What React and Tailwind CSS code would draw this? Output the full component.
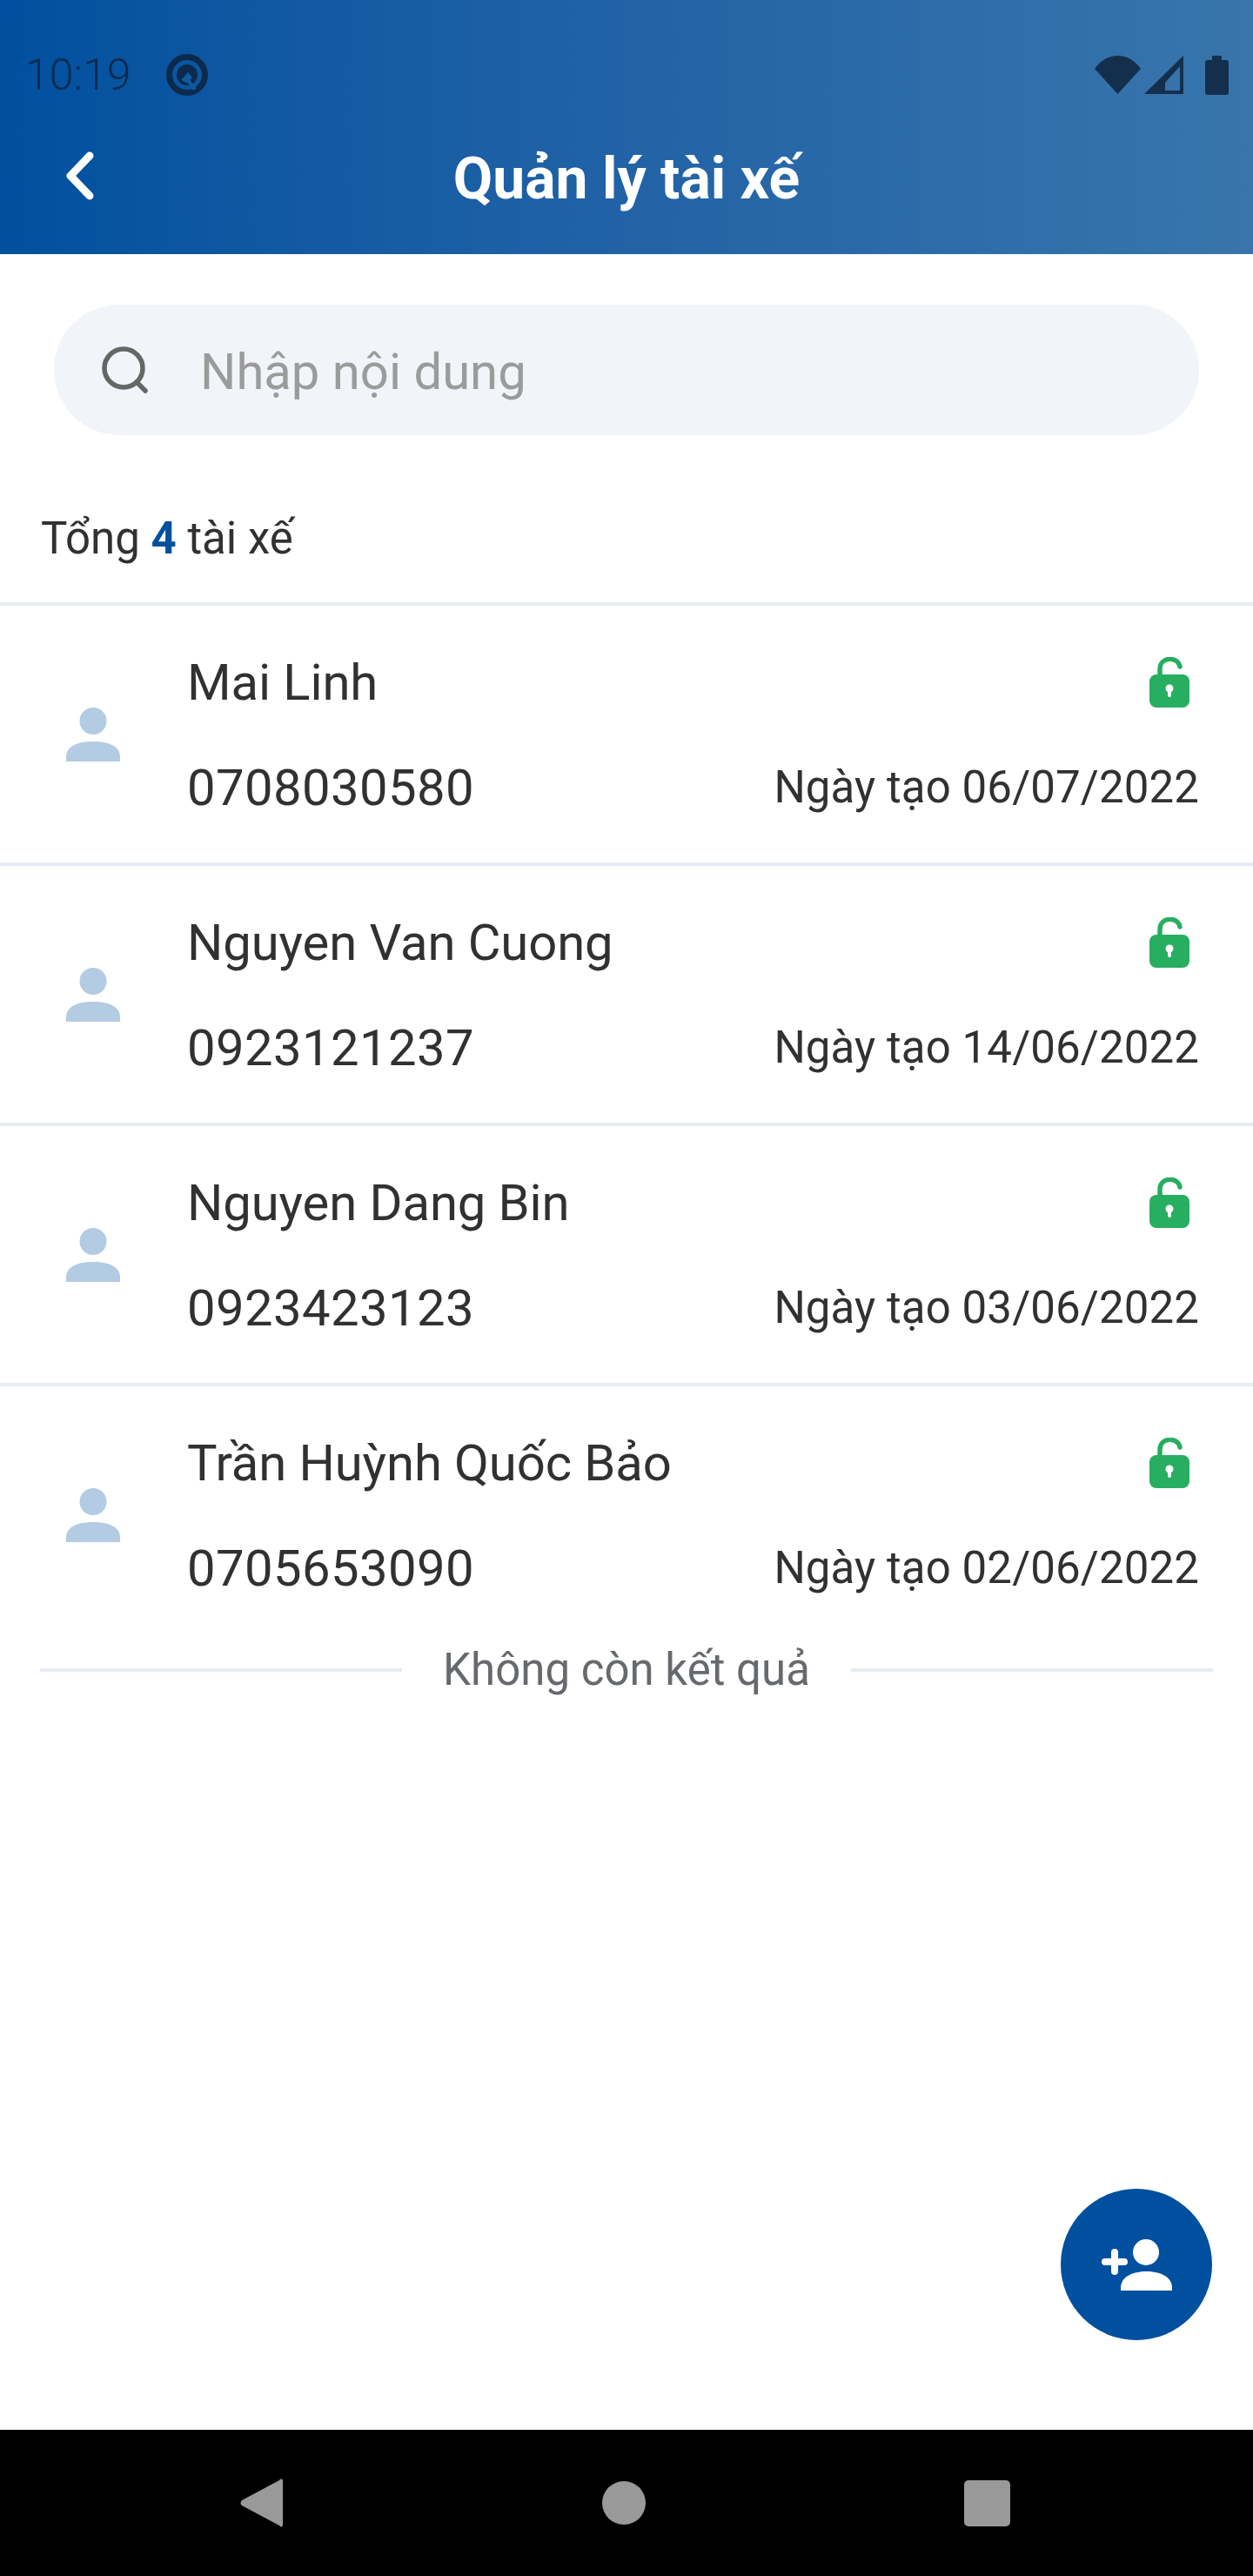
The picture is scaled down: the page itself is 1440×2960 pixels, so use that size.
const drivers = [
  { name: "Mai Linh", phone: "0708030580", created: "06/07/2022" },
  { name: "Nguyen Van Cuong", phone: "0923121237", created: "14/06/2022" },
  { name: "Nguyen Dang Bin", phone: "0923423123", created: "03/06/2022" },
  { name: "Trần Huỳnh Quốc Bảo", phone: "0705653090", created: "02/06/2022" },
];

function StatusBar() {
  return (
    <div className="flex h-[62px] items-center justify-between pl-[29px] pr-[28px] text-[#0b2a4c]">
      <div className="flex items-center gap-[40px]">
        <span className="text-[50px] font-light leading-[48px]">10:19</span>
        {/* Q badge */}
        <svg viewBox="0 0 50 48" className="h-[48px] w-[50px]">
          <circle cx="25" cy="24" r="20.5" fill="none" stroke="currentColor" strokeWidth="7" />
          <circle cx="25" cy="24" r="12" fill="currentColor" />
          <path d="M18 30 L26 21 L31 27 L26 34 Z" fill="#0f5a9f" />
          <path d="M26 30 L34 41" stroke="#0f5a9f" strokeWidth="4" />
        </svg>
      </div>
      <div className="flex items-center">
        <svg viewBox="0 0 53 44" className="h-[44px] w-[53px] fill-[#142f4c]">
          <path d="M0 15 C14 -5 39 -5 53 15 L26.5 44 Z" />
        </svg>
        <svg viewBox="0 0 45 44" className="ml-[4px] h-[44px] w-[45px] fill-[#142f4c]">
          <path fillRule="evenodd" d="M45 0 V44 H0 Z M41 12 L24 31 V40 H41 Z" />
        </svg>
        <svg viewBox="0 0 27 45" className="ml-[25px] h-[45px] w-[27px] fill-[#142f4c]">
          <path d="M8 0 H19 V5 H24 Q27 5 27 8 V42 Q27 45 24 45 H3 Q0 45 0 42 V8 Q0 5 3 5 H8 Z" />
        </svg>
      </div>
    </div>
  );
}

function Header() {
  return (
    <div className="h-[292px] bg-gradient-to-r from-[#00509f] to-[#3975ac] pt-[55px]">
      <StatusBar />
      <div className="relative mt-[42px] flex h-[90px] items-center justify-center">
        <svg viewBox="0 0 34 58" className="absolute left-[75px] top-[14px] h-[58px] w-[34px]" fill="none" stroke="#fff" strokeWidth="9" strokeLinecap="round" strokeLinejoin="round">
          <path d="M28 6 L6 29 L28 52" />
        </svg>
        <h1 className="pt-[3px] text-[66px] font-bold leading-[90px] text-white">Quản lý tài xế</h1>
      </div>
    </div>
  );
}

function SearchBar() {
  return (
    <div className="mx-[62px] mt-[58px] flex h-[150px] items-center rounded-[75px] bg-[#f1f4f9] pl-[54px]">
      <svg viewBox="0 0 54 54" className="h-[54px] w-[54px]" fill="none" stroke="#666" strokeWidth="5.5" strokeLinecap="round">
        <circle cx="26" cy="25" r="22" />
        <path d="M41 41 L51 51" />
      </svg>
      <span className="ml-[60px] mt-[4px] text-[58px] text-[#9b9b9b]">Nhập nội dung</span>
    </div>
  );
}

function AvatarIcon() {
  return (
    <svg viewBox="0 0 62 62" className="h-[62px] w-[62px] fill-[#b3cbe3]">
      <circle cx="31" cy="15.5" r="15.5" />
      <path d="M0 62 V57 C0 44 14 39 31 39 C48 39 62 44 62 57 V62 Z" />
    </svg>
  );
}

function LockIcon() {
  return (
    <svg viewBox="0 0 46 58" className="h-[58px] w-[46px]">
      <path d="M12 22 V14 C12 -1 33 -1 35 11" fill="none" stroke="#27ae60" strokeWidth="5.5" strokeLinecap="round" />
      <rect x="0" y="20" width="46" height="38" rx="8" fill="#27ae60" />
      <circle cx="23" cy="36" r="4.5" fill="#fff" />
      <rect x="21" y="36" width="4" height="10" rx="2" fill="#fff" />
    </svg>
  );
}

function DriverRow({ driver }) {
  return (
    <div className="flex h-[299px] items-center border-t-[4px] border-[#e6ecf4] pl-[76px] pr-[62px]">
      <AvatarIcon />
      <div className="ml-[77px] flex-1 pt-[2px]">
        <div className="flex h-[68px] items-center justify-between">
          <span className="text-[58px] leading-[68px] tracking-[-0.1px] text-[#2f3133]">{driver.name}</span>
          <span className="mr-[11px]"><LockIcon /></span>
        </div>
        <div className="mt-[53px] flex h-[68px] items-center justify-between">
          <span className="text-[58px] leading-[68px] tracking-[0.4px] text-[#2f3133]">{driver.phone}</span>
          <span className="text-[51px] leading-[68px] tracking-[0.1px] text-[#2f3133]">Ngày tạo {driver.created}</span>
        </div>
      </div>
    </div>
  );
}

function AddDriverIcon() {
  return (
    <svg viewBox="0 0 174 174" className="h-[174px] w-[174px] fill-white">
      <circle cx="98" cy="73" r="15" />
      <path d="M69 117 V114 C69 101 83 95 98.5 95 C114 95 128 101 128 114 V117 Z" />
      <rect x="47" y="80" width="30" height="8" rx="4" />
      <rect x="58" y="69" width="8" height="30" rx="4" />
    </svg>
  );
}

function NavBar() {
  return (
    <div className="flex h-[168px] items-center justify-between bg-black pl-[276px] pr-[279px]">
      <svg viewBox="0 0 49 56" className="h-[56px] w-[49px] fill-[#999]">
        <path d="M49 3 V53 C49 56 47 56 45 54 L2 31 C0 29.5 0 27 2 25 L45 2 C47 0 49 0 49 3 Z" />
      </svg>
      <div className="h-[50px] w-[50px] rounded-full bg-[#999]" />
      <div className="h-[53px] w-[53px] rounded-[5px] bg-[#999]" />
    </div>
  );
}

export default function App() {
  return (
    <div className="flex h-[2960px] w-[1440px] flex-col bg-white font-['Roboto',sans-serif]">
      <Header />
      <div className="relative flex-1">
        <SearchBar />
        <p className="mt-[84px] h-[108px] pl-[47px] text-[51px] leading-[70px] text-[#2f3133]">
          Tổng <span className="font-bold text-[#00509f]">4</span> tài xế
        </p>
        <div>
          {drivers.map((d) => (
            <DriverRow key={d.phone} driver={d} />
          ))}
        </div>
        <div className="flex items-center pl-[46px] pr-[46px]">
          <div className="h-[4px] flex-1 bg-[#e6ecf4]" />
          <span className="px-[47px] text-[51px] leading-[62px] text-[#666a6e]">Không còn kết quả</span>
          <div className="h-[4px] flex-1 bg-[#e6ecf4]" />
        </div>
        <button className="absolute bottom-[103px] right-[47px] h-[174px] w-[174px] rounded-full bg-[#00509f]">
          <AddDriverIcon />
        </button>
      </div>
      <NavBar />
    </div>
  );
}
